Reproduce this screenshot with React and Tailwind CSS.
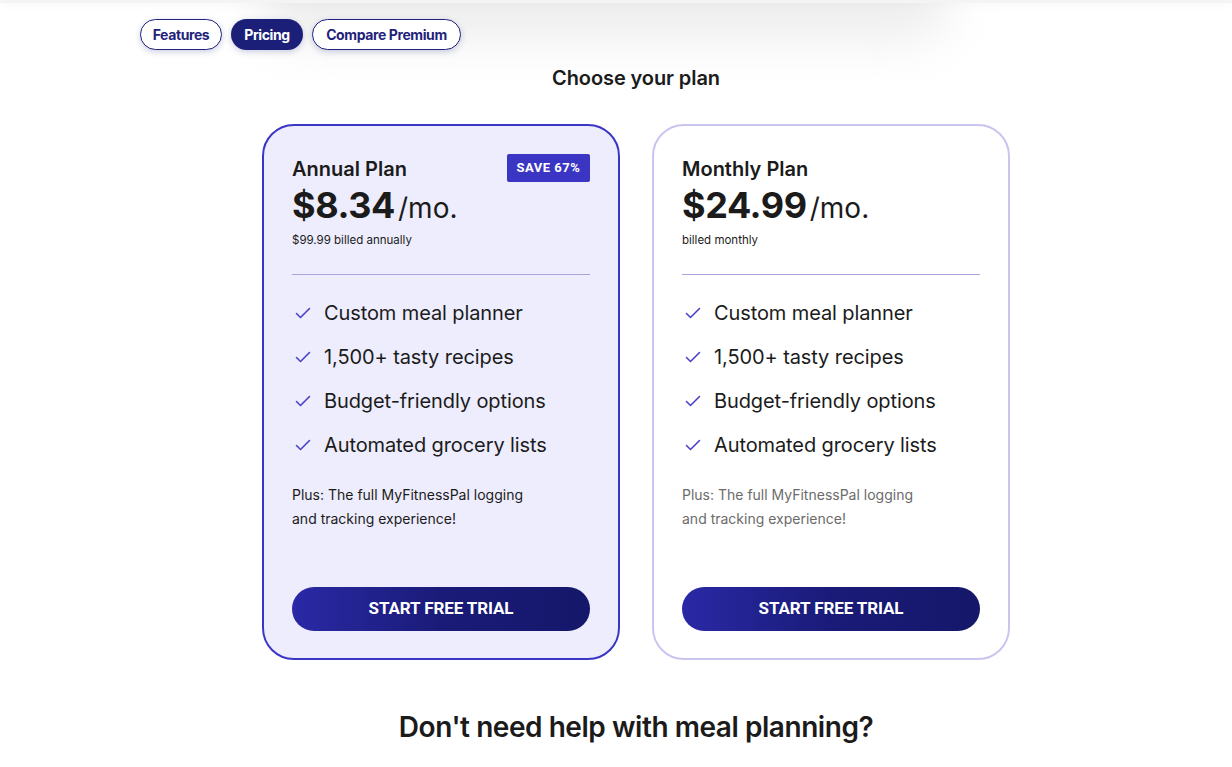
import React from "react";

const features = [
  "Custom meal planner",
  "1,500+ tasty recipes",
  "Budget-friendly options",
  "Automated grocery lists",
];

function Check() {
  return (
    <svg width="18" height="18" viewBox="0 0 18 18" fill="none" className="shrink-0">
      <path d="M2.5 9.5l4 4 9-9" stroke="#4a43c9" strokeWidth="1.6" strokeLinecap="round" strokeLinejoin="round" />
    </svg>
  );
}

function PlanCard({ title, price, billed, badge, featured }) {
  return (
    <div
      className={
        featured
          ? "w-[358px] h-[536px] rounded-[32px] border-2 border-[#3b36c4] bg-[#eeedfd] px-7 pt-[28px] pb-[27px] flex flex-col"
          : "w-[358px] h-[536px] rounded-[32px] border-2 border-[#c9c5f1] bg-white px-7 pt-[28px] pb-[27px] flex flex-col"
      }
    >
      <div className="flex items-start justify-between h-[30px]">
        <h3 className="text-[20px] leading-[30px] font-semibold text-[#1b1b1b]">{title}</h3>
        {badge && (
          <span className="h-7 w-[83px] flex items-center justify-center rounded-[2px] bg-[#3a35c3] text-white text-[13px] font-bold tracking-[0.5px] font-['Roboto',sans-serif]">
            {badge}
          </span>
        )}
      </div>
      <div className="flex items-baseline h-[44px] -mt-px">
        <span className="text-[36px] font-bold text-[#1b1b1b] tracking-[-0.4px] leading-[44px]">{price}</span>
        <span className="text-[28px] text-[#1b1b1b] ml-[3px] leading-[44px]">/mo.</span>
      </div>
      <p className="text-[11.5px] text-[#1b1b1b] mt-[5px] leading-[16px]">{billed}</p>
      <div className="h-px bg-[#a9a5dc] mt-[26px]" />
      <ul className="mt-[25px] flex flex-col gap-[18px]">
        {features.map((f) => (
          <li key={f} className="flex items-center gap-[12px] pl-[2px] h-[26px] text-[20px] text-[#1b1b1b] tracking-[-0.1px]">
            <Check />
            <span>{f}</span>
          </li>
        ))}
      </ul>
      <p className={featured ? "mt-[25px] text-[14px] leading-[24px] text-[#1b1b1b]" : "mt-[25px] text-[14px] leading-[24px] text-[#6b6b6b]"}>
        Plus: The full MyFitnessPal logging
        <br />
        and tracking experience!
      </p>
      <button className="mt-auto h-11 w-full rounded-full bg-gradient-to-r from-[#2a29a6] via-[#1a1b78] to-[#15176a] text-white text-[17px] font-bold font-['Roboto',sans-serif] tracking-[-0.1px]">
        START FREE TRIAL
      </button>
    </div>
  );
}

export default function App() {
  return (
    <div className="relative min-h-[767px] bg-white font-['Inter',sans-serif] overflow-hidden">
      <div className="absolute left-[260px] top-[-45px] w-[690px] h-[85px] rounded-[40px] bg-[#e6e6e6] blur-[24px] opacity-70" />
      <div className="absolute left-0 right-0 top-0 h-[3px] bg-[#f4f4f4] shadow-[0_2px_8px_rgba(0,0,0,0.05)]" />
      <div className="relative pt-[19px]">
        <nav className="flex gap-[9px] pl-[140px]">
          <button className="h-[31px] w-[82px] rounded-full border border-[#1f237a] bg-white text-[#1f237a] text-[14px] font-bold tracking-[-0.4px] shadow-[0_2px_6px_rgba(31,35,122,0.22)]">
            Features
          </button>
          <button className="h-[31px] w-[72px] rounded-full bg-[#1b1f78] text-white text-[14px] font-bold tracking-[-0.4px] shadow-[0_2px_6px_rgba(31,35,122,0.22)]">
            Pricing
          </button>
          <button className="h-[31px] w-[149px] rounded-full border border-[#1f237a] bg-white text-[#1f237a] text-[14px] font-bold tracking-[-0.4px] shadow-[0_2px_6px_rgba(31,35,122,0.22)]">
            Compare Premium
          </button>
        </nav>
        <div className="ml-[262px] w-[748px]">
          <h2 className="mt-[14px] text-center text-[20px] leading-[28px] font-semibold text-[#1b1b1b] tracking-[-0.1px]">Choose your plan</h2>
          <div className="mt-[32px] flex gap-8">
            <PlanCard title="Annual Plan" price="$8.34" billed="$99.99 billed annually" badge="SAVE 67%" featured />
            <PlanCard title="Monthly Plan" price="$24.99" billed="billed monthly" />
          </div>
          <h2 className="mt-[47px] text-center text-[28px] leading-[40px] font-semibold text-[#1b1b1b] tracking-[-0.45px]">
            Don't need help with meal planning?
          </h2>
        </div>
      </div>
    </div>
  );
}
